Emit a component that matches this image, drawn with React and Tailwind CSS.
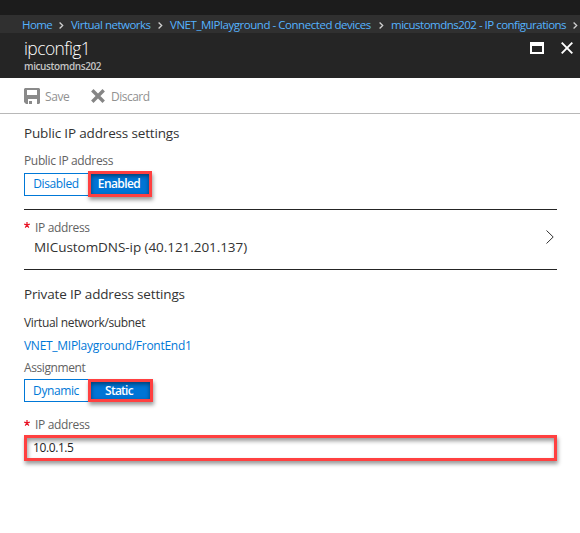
function Crumb({ children, className }) {
  return <span className={`block whitespace-nowrap text-[11.5px] text-[#55b3ff] ${className}`}>{children}</span>;
}

function CrumbArrow({ className }) {
  return (
    <svg className={`h-[7px] w-[5px] shrink-0 ${className}`} viewBox="0 0 5 7" fill="none" stroke="#d0d0d0" strokeWidth="1.3">
      <path d="M.6 .5 3.7 3.5 .6 6.5" />
    </svg>
  );
}

function SaveIcon() {
  return (
    <svg className="h-4 w-4 shrink-0" viewBox="0 0 16 16" fill="#8a8a8a">
      <path fillRule="evenodd" d="M1 0H15L16 1V15L15 16H2L0 14V1ZM3 2V7H13V2Z" />
      <path fill="#fff" d="M4 11H13V16H8V13H5V16H4Z" />
    </svg>
  );
}

function Required() {
  return (
    <svg className="mb-[5px] h-[6px] w-[6px] shrink-0" viewBox="0 0 6 6" stroke="#e81123" strokeWidth="1.2">
      <path d="M3 0V3M.2 2.1 3 3M5.8 2.1 3 3M1.2 5.6 3 3M4.8 5.6 3 3" />
    </svg>
  );
}

function Line({ children, className }) {
  return <div className={`flex items-center whitespace-nowrap ${className}`}>{children}</div>;
}

export default function App() {
  return (
    <div className="h-[533px] w-[580px] overflow-hidden bg-white font-['Open_Sans','Noto_Sans',sans-serif] text-[12px] leading-4 text-[#333]">
      <div className="h-[15px] bg-[#1c1c1c]" />
      <nav className="flex h-[18px] items-center bg-[#303030] pt-[2px] pl-[22px]">
        <Crumb className="w-[30px] tracking-[-0.6px]">Home</Crumb>
        <CrumbArrow className="ml-[7px]" />
        <Crumb className="ml-[7px] w-[79px] tracking-[-0.5px]">Virtual networks</Crumb>
        <CrumbArrow className="ml-[8px]" />
        <Crumb className="ml-[7px] w-[201px] tracking-[-0.46px]">VNET_MIPlayground - Connected devices</Crumb>
        <CrumbArrow className="ml-[8px]" />
        <Crumb className="ml-[7px] w-[175px] tracking-[-0.51px]">micustomdns202 - IP configurations</Crumb>
        <CrumbArrow className="ml-[7px]" />
      </nav>
      <header className="flex h-[45px] justify-between bg-[#252525] pr-[7px] pl-6 text-white">
        <div>
          <h1 className="mt-[4px] h-[22px] text-[17.5px] leading-[22px] font-light tracking-[-0.6px]">ipconfig1</h1>
          <p className="h-[14px] text-[10px] leading-[14px] font-semibold tracking-[-0.4px] text-[#c4c4c4]">micustomdns202</p>
        </div>
        <div className="flex gap-[17px] pt-[9px]">
          <div className="h-3 w-[14px] border-2 border-t-4 border-white" />
          <svg className="h-3 w-3" viewBox="0 0 12 12" stroke="#fff" strokeWidth="1.9">
            <path d="M.7 .7 11.3 11.3M11.3 .7 .7 11.3" />
          </svg>
        </div>
      </header>
      <div className="flex h-[36px] items-center border-b border-[#b8b8b8] pl-6 text-[#919191]">
        <SaveIcon />
        <span className="mt-[2px] ml-[5px] w-6 tracking-[-0.4px]">Save</span>
        <svg className="ml-[22px] h-[14px] w-[14px]" viewBox="0 0 14 14" stroke="#858585" strokeWidth="3.4">
          <path d="M1.3 1.3 12.7 12.7M12.7 1.3 1.3 12.7" />
        </svg>
        <span className="mt-[2px] ml-[6px] tracking-[-0.5px]">Discard</span>
      </div>
      <main className="mr-[23px] ml-6">
        <Line className="mt-[9px] h-5 text-[13.5px] tracking-[-0.16px]">Public IP address settings</Line>
        <Line className="mt-[10px] h-4 text-[12px] tracking-[-0.35px] text-[#626262]">Public IP address</Line>
        <div className="mt-[2px] flex h-[26px] items-center">
          <button className="h-[23px] w-16 border border-r-0 border-[#0078d7] pr-px text-[12px] leading-[20px] tracking-[-0.4px] text-[#0078d7]">Disabled</button>
          <button className="h-[26px] w-16 border-3 border-[#ff4040] bg-[#0074d5] pr-[2px] text-[12px] leading-5 font-semibold tracking-[-0.6px] text-white shadow-[1px_3px_4px_#0006,inset_0_2px_4px_#0007]">Enabled</button>
        </div>
        <section className="mt-3 flex h-[61px] items-center justify-between border-y border-[#252525] pr-[3px]">
          <div className="-mt-[3px]">
            <Line className="h-4 gap-[5px] text-[12px] tracking-[-0.35px] text-[#626262]"><Required />IP address</Line>
            <Line className="mt-px h-5 pl-[10px] text-[13.5px] tracking-[-0.06px]">MICustomDNS-ip (40.121.201.137)</Line>
          </div>
          <svg className="mb-[5px] h-[14px] w-2" viewBox="0 0 8 14" fill="none" stroke="#333" strokeWidth="1">
            <path d="M.5 .5 7.2 7 .5 13.5" />
          </svg>
        </section>
        <Line className="mt-[14px] h-5 text-[13.5px] tracking-[-0.16px]">Private IP address settings</Line>
        <Line className="mt-[11px] h-4 text-[12px] tracking-[-0.35px]">Virtual network/subnet</Line>
        <Line className="mt-[7px] h-4 text-[12px] tracking-[-0.28px] text-[#0078d7]">VNET_MIPlayground/FrontEnd1</Line>
        <Line className="mt-[6px] h-4 text-[12px] tracking-[-0.4px] text-[#626262]">Assignment</Line>
        <div className="mt-[3px] flex h-[23px] items-center">
          <button className="h-[23px] w-16 border border-r-0 border-[#0078d7] pr-px text-[12px] leading-[21px] tracking-[-0.4px] text-[#0078d7]">Dynamic</button>
          <button className="h-[23px] w-[65px] border-3 border-[#ff4040] bg-[#0074d5] pr-[3px] text-[12px] leading-[17px] font-semibold tracking-[-0.75px] text-white shadow-[1px_3px_4px_#0006,inset_0_2px_4px_#0007]">Static</button>
        </div>
        <Line className="mt-[15px] h-4 gap-[5px] text-[12px] tracking-[-0.35px] text-[#626262]"><Required />IP address</Line>
        <input className="mt-[2px] block h-[26px] w-full border-3 border-[#ff4040] px-[6px] pb-[2px] text-[12px] tracking-[-0.4px] text-[#222] shadow-[1px_3px_4px_#0006,inset_1px_3px_4px_#0006]" defaultValue="10.0.1.5" />
      </main>
    </div>
  );
}
